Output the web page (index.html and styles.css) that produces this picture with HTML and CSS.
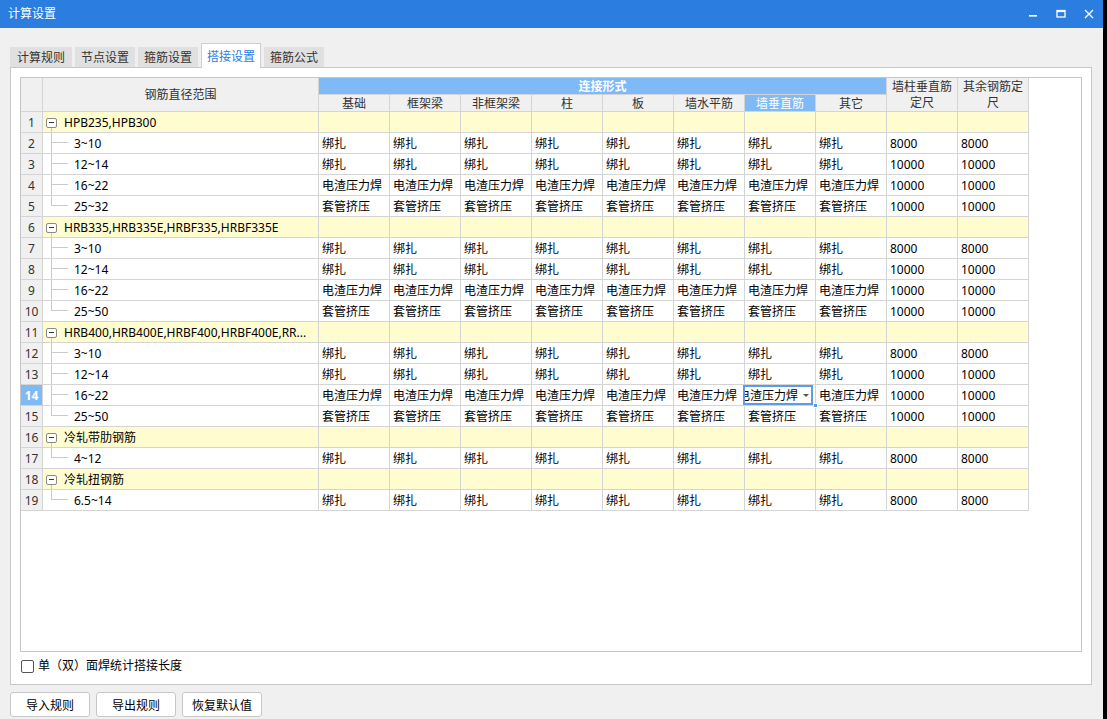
FILE: index.html
```html
<!DOCTYPE html>
<html lang="zh-CN">
<head>
<meta charset="utf-8">
<title>计算设置</title>
<link rel="stylesheet" href="styles.css">
</head>
<body>
<div class="window">
  <div class="titlebar">
    <span class="title">计算设置</span>
    <div class="winbtns">
      <span class="wbtn"><svg width="10" height="10" viewBox="0 0 10 10"><rect x="1" y="6" width="8" height="1.6" fill="#fff"/></svg></span>
      <span class="wbtn"><svg width="10" height="10" viewBox="0 0 10 10"><rect x="1" y="1.5" width="8" height="6.5" fill="none" stroke="#fff" stroke-width="1.3"/><rect x="1" y="1.5" width="8" height="1.6" fill="#fff"/></svg></span>
      <span class="wbtn"><svg width="10" height="10" viewBox="0 0 10 10"><path d="M1 1 L9 9 M9 1 L1 9" stroke="#fff" stroke-width="1.3"/></svg></span>
    </div>
  </div>

  <div class="tabs">
    <div class="tab first">计算规则</div>
    <div class="tab">节点设置</div>
    <div class="tab">箍筋设置</div>
    <div class="tab active">搭接设置</div>
    <div class="tab">箍筋公式</div>
  </div>

  <div class="panel">
    <div class="grid">
      <div class="head">
        <div class="hc corner"></div>
        <div class="hc range">钢筋直径范围</div>
        <div class="hc group">连接形式</div>
        <div class="hc two c11">墙柱垂直筋定尺</div>
        <div class="hc two c12">其余钢筋定尺</div>
        <div class="hc">基础</div>
        <div class="hc">框架梁</div>
        <div class="hc">非框架梁</div>
        <div class="hc">柱</div>
        <div class="hc">板</div>
        <div class="hc">墙水平筋</div>
        <div class="hc hsel">墙垂直筋</div>
        <div class="hc">其它</div>
      </div>

      <div class="row grp"><div class="num">1</div><div class="rng group"><span class="minus"></span>HPB235,HPB300</div><div></div><div></div><div></div><div></div><div></div><div></div><div></div><div></div><div></div><div></div></div>
      <div class="row"><div class="num">2</div><div class="rng child">3~10</div><div>绑扎</div><div>绑扎</div><div>绑扎</div><div>绑扎</div><div>绑扎</div><div>绑扎</div><div>绑扎</div><div>绑扎</div><div>8000</div><div>8000</div></div>
      <div class="row"><div class="num">3</div><div class="rng child">12~14</div><div>绑扎</div><div>绑扎</div><div>绑扎</div><div>绑扎</div><div>绑扎</div><div>绑扎</div><div>绑扎</div><div>绑扎</div><div>10000</div><div>10000</div></div>
      <div class="row"><div class="num">4</div><div class="rng child">16~22</div><div>电渣压力焊</div><div>电渣压力焊</div><div>电渣压力焊</div><div>电渣压力焊</div><div>电渣压力焊</div><div>电渣压力焊</div><div>电渣压力焊</div><div>电渣压力焊</div><div>10000</div><div>10000</div></div>
      <div class="row"><div class="num">5</div><div class="rng child last">25~32</div><div>套管挤压</div><div>套管挤压</div><div>套管挤压</div><div>套管挤压</div><div>套管挤压</div><div>套管挤压</div><div>套管挤压</div><div>套管挤压</div><div>10000</div><div>10000</div></div>

      <div class="row grp"><div class="num">6</div><div class="rng group"><span class="minus"></span>HRB335,HRB335E,HRBF335,HRBF335E</div><div></div><div></div><div></div><div></div><div></div><div></div><div></div><div></div><div></div><div></div></div>
      <div class="row"><div class="num">7</div><div class="rng child">3~10</div><div>绑扎</div><div>绑扎</div><div>绑扎</div><div>绑扎</div><div>绑扎</div><div>绑扎</div><div>绑扎</div><div>绑扎</div><div>8000</div><div>8000</div></div>
      <div class="row"><div class="num">8</div><div class="rng child">12~14</div><div>绑扎</div><div>绑扎</div><div>绑扎</div><div>绑扎</div><div>绑扎</div><div>绑扎</div><div>绑扎</div><div>绑扎</div><div>10000</div><div>10000</div></div>
      <div class="row"><div class="num">9</div><div class="rng child">16~22</div><div>电渣压力焊</div><div>电渣压力焊</div><div>电渣压力焊</div><div>电渣压力焊</div><div>电渣压力焊</div><div>电渣压力焊</div><div>电渣压力焊</div><div>电渣压力焊</div><div>10000</div><div>10000</div></div>
      <div class="row"><div class="num">10</div><div class="rng child last">25~50</div><div>套管挤压</div><div>套管挤压</div><div>套管挤压</div><div>套管挤压</div><div>套管挤压</div><div>套管挤压</div><div>套管挤压</div><div>套管挤压</div><div>10000</div><div>10000</div></div>

      <div class="row grp"><div class="num">11</div><div class="rng group"><span class="minus"></span>HRB400,HRB400E,HRBF400,HRBF400E,RR...</div><div></div><div></div><div></div><div></div><div></div><div></div><div></div><div></div><div></div><div></div></div>
      <div class="row"><div class="num">12</div><div class="rng child">3~10</div><div>绑扎</div><div>绑扎</div><div>绑扎</div><div>绑扎</div><div>绑扎</div><div>绑扎</div><div>绑扎</div><div>绑扎</div><div>8000</div><div>8000</div></div>
      <div class="row"><div class="num">13</div><div class="rng child">12~14</div><div>绑扎</div><div>绑扎</div><div>绑扎</div><div>绑扎</div><div>绑扎</div><div>绑扎</div><div>绑扎</div><div>绑扎</div><div>10000</div><div>10000</div></div>
      <div class="row"><div class="num cur">14</div><div class="rng child">16~22</div><div>电渣压力焊</div><div>电渣压力焊</div><div>电渣压力焊</div><div>电渣压力焊</div><div>电渣压力焊</div><div>电渣压力焊</div><div class="selcell"><div class="editor"><span class="etext"><span>电渣压力焊</span></span><span class="arrow"></span></div><span class="handle"></span></div><div>电渣压力焊</div><div>10000</div><div>10000</div></div>
      <div class="row"><div class="num">15</div><div class="rng child last">25~50</div><div>套管挤压</div><div>套管挤压</div><div>套管挤压</div><div>套管挤压</div><div>套管挤压</div><div>套管挤压</div><div>套管挤压</div><div>套管挤压</div><div>10000</div><div>10000</div></div>

      <div class="row grp"><div class="num">16</div><div class="rng group"><span class="minus"></span>冷轧带肋钢筋</div><div></div><div></div><div></div><div></div><div></div><div></div><div></div><div></div><div></div><div></div></div>
      <div class="row"><div class="num">17</div><div class="rng child last">4~12</div><div>绑扎</div><div>绑扎</div><div>绑扎</div><div>绑扎</div><div>绑扎</div><div>绑扎</div><div>绑扎</div><div>绑扎</div><div>8000</div><div>8000</div></div>

      <div class="row grp"><div class="num">18</div><div class="rng group"><span class="minus"></span>冷轧扭钢筋</div><div></div><div></div><div></div><div></div><div></div><div></div><div></div><div></div><div></div><div></div></div>
      <div class="row"><div class="num">19</div><div class="rng child last">6.5~14</div><div>绑扎</div><div>绑扎</div><div>绑扎</div><div>绑扎</div><div>绑扎</div><div>绑扎</div><div>绑扎</div><div>绑扎</div><div>8000</div><div>8000</div></div>
    </div>

    <label class="check"><span class="box"></span><span>单（双）面焊统计搭接长度</span></label>
  </div>

  <div class="buttons">
    <button class="btn">导入规则</button>
    <button class="btn">导出规则</button>
    <button class="btn">恢复默认值</button>
  </div>
</div>
</body>
</html>
```

FILE: styles.css
```css
* { box-sizing: border-box; }
html, body { margin: 0; padding: 0; background: #000; }
body {
  font-family: "Noto Sans", "Noto Sans CJK SC", sans-serif;
  font-size: 12px;
  color: #000;
}
.window {
  width: 1103px;
  height: 719px;
  background: #f0f0f0;
  display: flex;
  flex-direction: column;
  overflow: hidden;
}

/* title bar */
.titlebar {
  height: 28px;
  flex: none;
  background: #2b7ddf;
  color: #fff;
  display: flex;
  align-items: center;
  justify-content: space-between;
}
.title { padding-left: 8px; font-size: 12px; line-height: 28px; }
.winbtns { display: flex; }
.wbtn {
  width: 28px;
  height: 28px;
  display: flex;
  align-items: center;
  justify-content: center;
}

/* tabs */
.tabs {
  flex: none;
  margin-top: 15px;
  height: 24px;
  padding-left: 10px;
  display: flex;
  align-items: flex-end;
  gap: 3px;
}
.tab {
  width: 60px;
  height: 20px;
  background: #e0e0e0;
  color: #333;
  text-align: center;
  line-height: 20px;
  padding-top: 1px;
  font-size: 12px;
}
.tab.first { width: 62px; }
.tab.active {
  height: 25px;
  margin-bottom: -1px;
  background: #fff;
  color: #2b7ddf;
  border: 1px solid #cfcfcf;
  border-bottom: none;
  line-height: 23px;
  position: relative;
  z-index: 2;
}

/* panel */
.panel {
  flex: none;
  margin-left: 10px;
  width: 1082px;
  height: 618px;
  background: #fff;
  border: 1px solid #c8c8c8;
  padding: 9px 9px 0 9px;
}
.grid {
  width: 1062px;
  height: 575px;
  border: 1px solid #c6c6c6;
  background: #fff;
  overflow: hidden;
}

.head, .row {
  display: grid;
  grid-template-columns: 22px 276px repeat(10, 71px);
}
.head { grid-template-rows: 17px 17px; }
.hc {
  background: #f0f0f0;
  color: #333;
  border-right: 1px solid #d4d4d4;
  border-bottom: 1px solid #d4d4d4;
  text-align: center;
  line-height: 16px;
  padding-top: 1px;
  white-space: nowrap;
  overflow: hidden;
}
.hc.corner { grid-column: 1; grid-row: 1 / 3; }
.hc.range {
  grid-column: 2; grid-row: 1 / 3;
  display: flex; align-items: center; justify-content: center;
}
.hc.group {
  grid-column: 3 / 11; grid-row: 1;
  background: #7fbaf7;
  color: #fff;
  font-weight: bold;
}
.hc.two {
  grid-row: 1 / 3;
  white-space: normal;
  display: flex; align-items: center; justify-content: center;
  padding: 1px 1px 0;
}
.hc.c11 { grid-column: 11; }
.hc.c12 { grid-column: 12; }
.hc.hsel { background: #7fbaf7; color: #fff; }

.row { height: 21px; }
.row > div {
  border-right: 1px solid #d4d4d4;
  border-bottom: 1px solid #d4d4d4;
  line-height: 19px;
  padding-top: 1px;
  padding-left: 3px;
  white-space: nowrap;
  overflow: hidden;
}
.row.grp > div { background: #fffdd0; }
.row > .num, .row.grp > .num {
  background: #f0f0f0;
  color: #333;
  text-align: center;
  padding-left: 0;
}
.row > .num.cur { background: #7fbaf7; color: #fff; font-weight: bold; }

.rng { position: relative; }
.row > .rng.group { padding-left: 21px; }
.row > .rng.child { padding-left: 31px; }
.minus {
  position: absolute;
  left: 3px; top: 6px;
  width: 11px; height: 10px;
  border: 1px solid #8a8a8a;
  border-radius: 2px;
  background: #fff;
}
.minus::after {
  content: "";
  position: absolute;
  left: 2px; top: 3px;
  width: 5px; height: 1px;
  background: #333;
}
.rng.group::after {
  content: "";
  position: absolute;
  left: 8px; top: 16px; bottom: -1px;
  width: 1px;
  background: #cacaca;
}
.rng.child::before {
  content: "";
  position: absolute;
  left: 8px; top: 0; bottom: -1px;
  width: 1px;
  background: #cacaca;
}
.rng.child.last::before { bottom: auto; height: 10px; }
.rng.child::after {
  content: "";
  position: absolute;
  left: 9px; top: 9px;
  width: 16px; height: 1px;
  background: #cacaca;
}

/* active editor cell */
.row > .selcell { position: relative; overflow: visible; padding: 0; }
.editor {
  position: absolute;
  left: -2px; top: 0;
  width: 70px; height: 20px;
  border: 2px solid #5b9be8;
  background: #fff;
  display: flex;
  align-items: center;
  z-index: 1;
}
.etext {
  flex: 1;
  min-width: 0;
  overflow: hidden;
  display: flex;
  justify-content: flex-end;
  white-space: nowrap;
  line-height: 16px;
  padding-top: 1px;
}
.etext > span { flex: none; }
.arrow {
  flex: none;
  width: 0; height: 0;
  margin: 1px 2px 0 5px;
  border-left: 3px solid transparent;
  border-right: 3px solid transparent;
  border-top: 3px solid #555;
}
.handle {
  position: absolute;
  right: -3px; bottom: -3px;
  width: 5px; height: 5px;
  background: #5b9be8;
  border: 1px solid #fff;
  z-index: 2;
}

/* checkbox */
.check {
  display: flex;
  align-items: center;
  gap: 4px;
  margin-top: 7px;
  margin-left: 1px;
  height: 14px;
  line-height: 14px;
  font-size: 12px;
  color: #000;
}
.check .box {
  width: 13px; height: 13px;
  border: 1px solid #555;
  border-radius: 2px;
  background: #fff;
}

/* buttons */
.buttons {
  flex: none;
  display: flex;
  gap: 6px;
  margin-top: 7px;
  padding-left: 10px;
}
.btn {
  width: 80px;
  height: 25px;
  background: #fff;
  border: 1px solid #c8c8c8;
  border-radius: 3px;
  font-family: "Noto Sans", "Noto Sans CJK SC", sans-serif;
  font-size: 12px;
  color: #000;
  padding: 0;
}
```
